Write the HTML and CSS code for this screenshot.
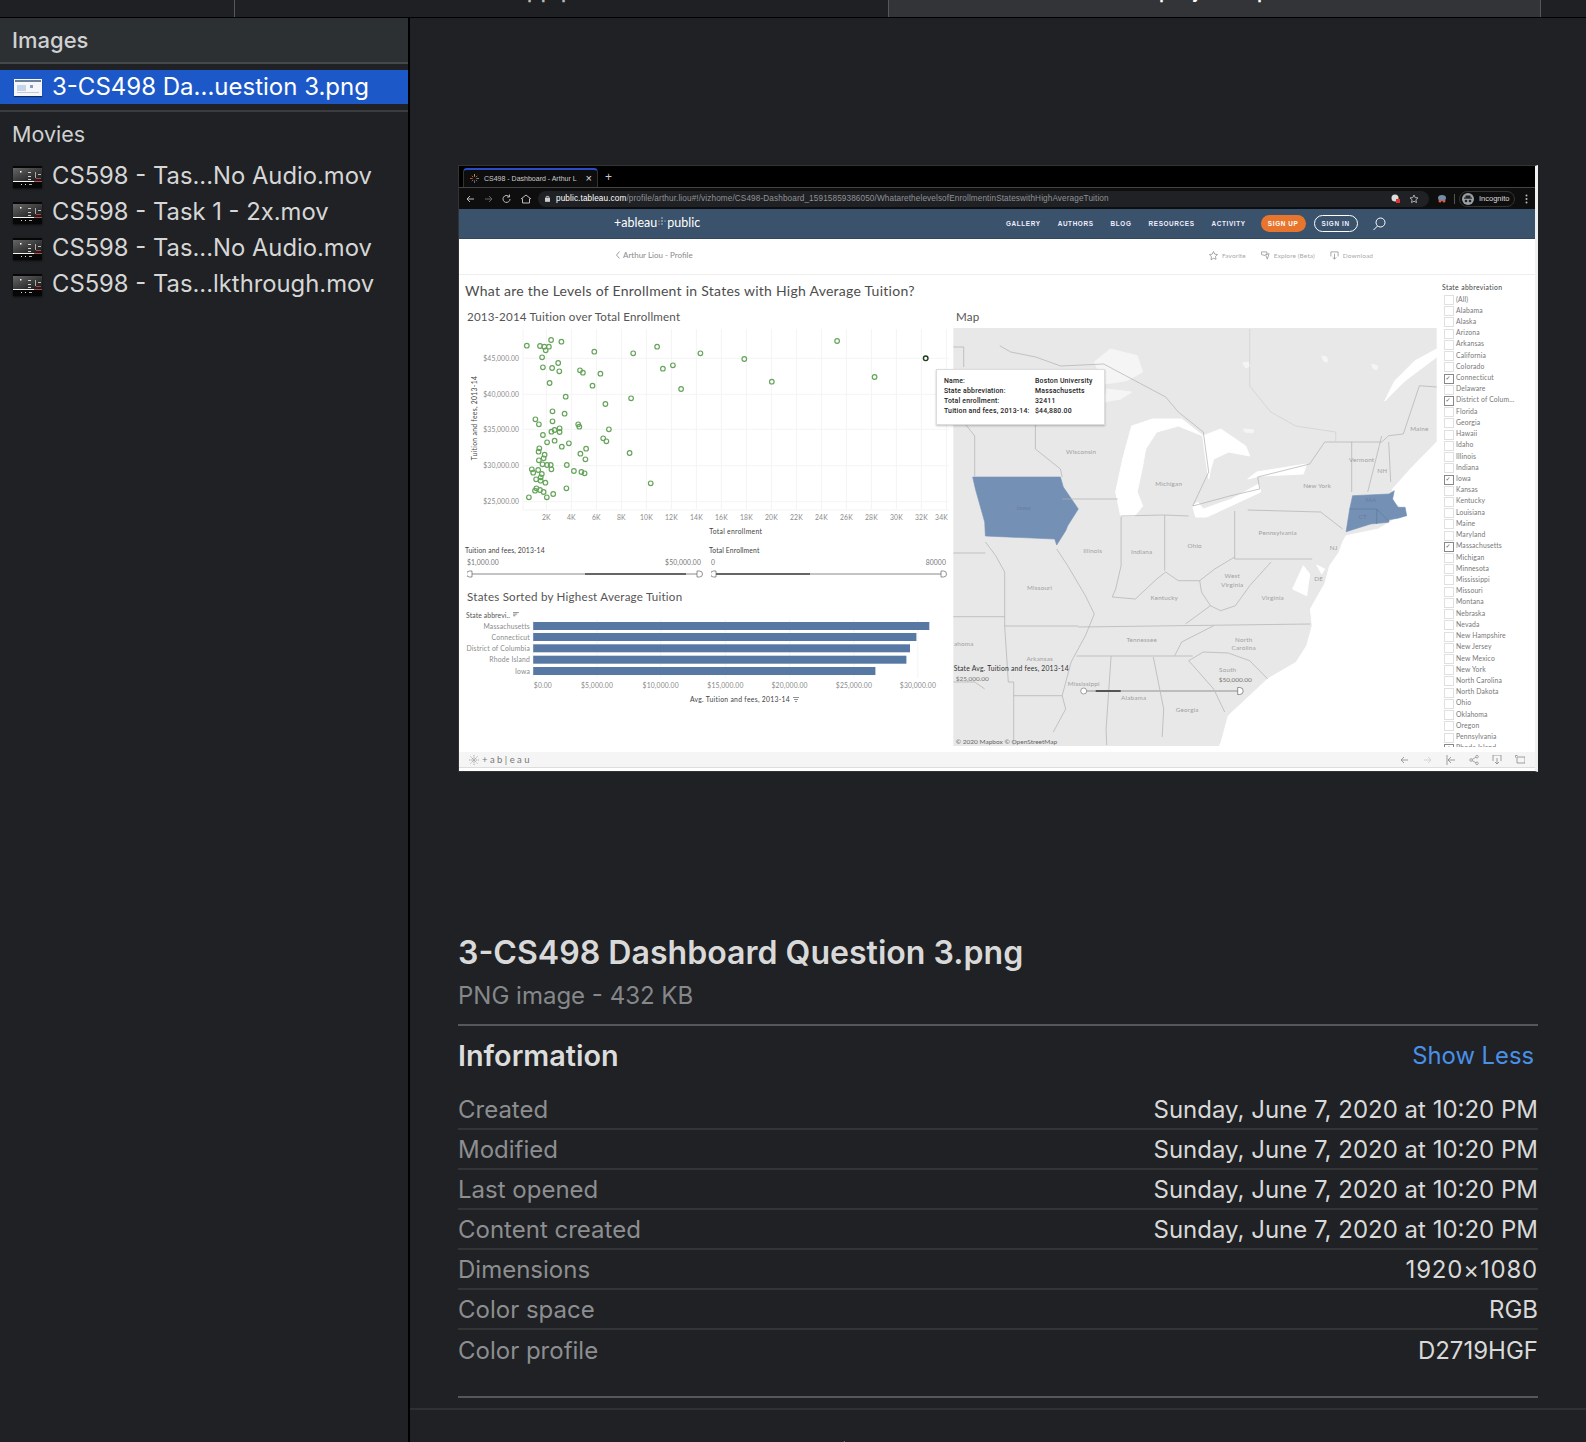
FILE: index.html
```html
<!DOCTYPE html>
<html lang="en">
<head>
<meta charset="utf-8">
<title>Quick Look</title>
<link rel="stylesheet" href="styles.css">
</head>
<body>
<div class="tabs">
  <div class="tab tab-a"></div>
  <div class="tab tab-b"><span class="tab-title">pp.pdf</span></div>
  <div class="tab tab-c"><span class="tab-title">project.zip</span></div>
  <div class="tab tab-d"></div>
</div>
<div class="main">
  <aside class="side">
    <div class="side-head">Images</div>
    <div class="side-sel">
      <svg class="thumb-img" viewBox="0 0 28 17"><rect width="28" height="17" fill="#f4f6fa"/><rect x="1" y="1" width="26" height="2" fill="#6d7f95"/><rect x="3" y="6" width="9" height="6" fill="#c5d3e8"/><rect x="16" y="6" width="3" height="3" fill="#7f9ccc"/><rect x="3" y="13" width="22" height="1" fill="#c4c8d0"/></svg>
      <span>3-CS498 Da...uestion 3.png</span>
    </div>
    <div class="side-rule"></div>
    <div class="side-label">Movies</div>
    <div class="movie"><svg class="thumb-mov" viewBox="0 0 29 22"><use href="#mov"/></svg><span>CS598 - Tas...No Audio.mov</span></div>
    <div class="movie"><svg class="thumb-mov" viewBox="0 0 29 22"><use href="#mov"/></svg><span>CS598 - Task 1 - 2x.mov</span></div>
    <div class="movie"><svg class="thumb-mov" viewBox="0 0 29 22"><use href="#mov"/></svg><span>CS598 - Tas...No Audio.mov</span></div>
    <div class="movie"><svg class="thumb-mov" viewBox="0 0 29 22"><use href="#mov"/></svg><span>CS598 - Tas...lkthrough.mov</span></div>
    <svg class="defs" width="0" height="0"><defs>
      <linearGradient id="movg" x1="0" y1="0" x2="1" y2="1"><stop offset="0" stop-color="#666"/><stop offset="1" stop-color="#161616"/></linearGradient>
      <g id="mov">
      <rect width="29" height="22" fill="#070707"/>
      <rect y="2" width="29" height="13" fill="url(#movg)"/>
      <rect y="15" width="21" height="1" fill="#f4f4f4"/><rect x="21" y="15" width="8" height="1" fill="#a55"/>
      <rect x="7" y="5" width="1.500" height="1.500" fill="#fff"/><rect x="15" y="6" width="3" height="1" fill="#ccc"/><rect x="15" y="10" width="3" height="1" fill="#ccc"/><rect x="15" y="13" width="3" height="1" fill="#ccc"/>
      <rect x="22" y="6" width="1" height="6" fill="#aaa"/><rect x="25" y="8" width="3" height="1" fill="#bbb"/><rect x="23" y="12" width="5" height="1" fill="#a44"/>
      <rect x="8" y="18" width="1" height="1" fill="#ddd"/><rect x="12" y="18" width="1" height="1" fill="#ddd"/><rect x="16" y="18" width="3" height="1" fill="#aaa"/>
    </g></defs></svg>
  </aside>
  <main class="detail">
    <div class="shot">
      <div class="c-tabs">
        <div class="c-tab"><svg class="fav" viewBox="0 0 10 10"><path d="M5 0v3" stroke="#e8a23c"/><path d="M5 7v3" stroke="#4a7fc4"/><path d="M0 5h3" stroke="#d8552c"/><path d="M7 5h3" stroke="#6a8fa8"/><path d="M2 2l1.500 1.500M8 2L6.500 3.500M2 8l1.500-1.500M8 8L6.500 6.500" stroke="#c96a3c"/></svg><span class="c-tab-t">CS498 - Dashboard - Arthur L</span><span class="c-x">×</span></div>
        <span class="c-plus">+</span>
      </div>
      <div class="c-bar">
        <svg class="nav-ico" viewBox="0 0 68 12"><path d="M8 6H1M4 3L1 6l3 3" stroke="#bbb" fill="none"/><path d="M19 6h7M23 3l3 3-3 3" stroke="#666" fill="none"/><path d="M43 3.500a3.500 3.500 0 1 0 1 2.500M43.500 1.500v2.500h-2.500" stroke="#bbb" fill="none"/><path d="M55 6l5-4 5 4M56.500 5.500V10h7V5.500" stroke="#bbb" fill="none"/></svg>
        <div class="c-url">
          <svg class="lock" viewBox="0 0 6 8"><rect y="3" width="6" height="5" fill="#ccc"/><path d="M1.500 3V1.500h3V3" stroke="#ccc" fill="none"/></svg>
          <span class="u-w">public.tableau.com</span><span class="u-g">/profile/arthur.liou#!/vizhome/CS498-Dashboard_15915859386050/WhatarethelevelsofEnrollmentinStateswithHighAverageTuition</span>
          <svg class="c-ext" viewBox="0 0 28 10"><circle cx="4" cy="4" r="3.500" fill="#ddd"/><rect x="5" y="5" width="4" height="4" fill="#d33"/><path d="M23 1l1.200 2.600 2.800.3-2.100 1.900.6 2.800L23 7.200 20.500 8.600l.6-2.800L19 3.900l2.800-.3z" fill="none" stroke="#ccc" stroke-width=".8"/></svg>
        </div>
        <svg class="c-spy" viewBox="0 0 10 8"><ellipse cx="5" cy="3" rx="4" ry="3" fill="#6f8da6"/><circle cx="3" cy="6" r="1.500" fill="#e05a4a"/><circle cx="7" cy="6" r="1.500" fill="#e05a4a"/></svg>
        <i class="c-sep"></i>
        <div class="c-inc"><svg class="inc-ico" viewBox="0 0 12 12"><circle cx="6" cy="6" r="6" fill="#9aa0a6"/><rect x="2" y="4.500" width="8" height="1.200" fill="#222"/><rect x="3.500" y="2.500" width="5" height="2.500" fill="#222"/><circle cx="4" cy="8" r="1.300" fill="#222"/><circle cx="8" cy="8" r="1.300" fill="#222"/></svg><span>Incognito</span></div>
        <svg class="c-dots" viewBox="0 0 3 10"><circle cx="1.500" cy="1.500" r="1" fill="#bbb"/><circle cx="1.500" cy="5" r="1" fill="#bbb"/><circle cx="1.500" cy="8.500" r="1" fill="#bbb"/></svg>
      </div>
      <div class="site-nav">
        <div class="site-logo">+ableau<svg class="logo-dots" viewBox="0 0 8 10"><circle cx="4" cy="1" r=".7"/><circle cx="1" cy="4" r=".6"/><circle cx="4" cy="4" r=".8"/><circle cx="7" cy="4" r=".6"/><circle cx="1" cy="7" r=".6"/><circle cx="4" cy="7" r=".7"/></svg>public</div>
        <div class="site-links">
          <span class="link-gal">GALLERY</span><span>AUTHORS</span><span>BLOG</span><span>RESOURCES</span><span>ACTIVITY</span>
          <span class="pill-up">SIGN UP</span><span class="pill-in">SIGN IN</span>
          <svg class="site-search" viewBox="0 0 14 14"><circle cx="8.500" cy="5.500" r="4.500" fill="none" stroke="#fff"/><path d="M5.500 9L1.500 13" stroke="#fff"/></svg>
        </div>
      </div>
      <div class="subbar">
        <span class="back"><svg class="chev" viewBox="0 0 4 8"><path d="M3.500 .5L.5 4l3 3.500" fill="none" stroke="#888" stroke-width=".8"/></svg>Arthur Liou - Profile</span>
        <div class="sub-actions">
          <span class="act act-fav"><svg viewBox="0 0 10 10"><path d="M5 .5l1.400 3 3.100.4-2.300 2.100.6 3.200L5 8.100 2.200 9.700l.6-3.200L.5 3.900l3.100-.4z" fill="none" stroke="#888" stroke-width=".8"/></svg>Favorite</span>
          <span class="act act-exp"><svg viewBox="0 0 10 10"><path d="M.5 1h6v3M.5 1v3l4 1M5 4l2 5 2-6z" fill="none" stroke="#888" stroke-width=".8"/></svg>Explore (Beta)</span>
          <span class="act"><svg viewBox="0 0 10 10"><path d="M1 6V1h8v5M5 3v6M3 7l2 2 2-2" fill="none" stroke="#888" stroke-width=".8"/></svg>Download</span>
        </div>
      </div>
      <div class="dash">
        <div class="dash-left">
          <div class="dash-title">What are the Levels of Enrollment in States with High Average Tuition?</div>
          <div class="sec-title sec-1">2013-2014 Tuition over Total Enrollment</div>
          <svg class="scatter" viewBox="458 326 491 214">
            <g class="grid">
              <path d="M523 329V510M546.400 329V510M571.400 329V510M596.400 329V510M621.400 329V510M646.400 329V510M671.400 329V510M696.400 329V510M721.400 329V510M746.400 329V510M771.400 329V510M796.400 329V510M821.400 329V510M846.400 329V510M871.400 329V510M896.400 329V510M921.400 329V510M946.400 329V510"/>
              <path d="M523 358.300H949M523 394.300H949M523 429.300H949M523 465.700H949M523 501.700H949M523 510H949"/>
            </g>
            <g class="ax-l">
              <text x="519" y="360.500">$45,000.00</text><text x="519" y="396.500">$40,000.00</text><text x="519" y="431.500">$35,000.00</text><text x="519" y="468">$30,000.00</text><text x="519" y="504">$25,000.00</text>
            </g>
            <text class="ax-t" transform="translate(477 418) rotate(-90)">Tuition and fees, 2013-14</text>
            <g class="ax-x">
              <text x="546.400" y="519.500">2K</text><text x="571.400" y="519.500">4K</text><text x="596.400" y="519.500">6K</text><text x="621.400" y="519.500">8K</text><text x="646.400" y="519.500">10K</text><text x="671.400" y="519.500">12K</text><text x="696.400" y="519.500">14K</text><text x="721.400" y="519.500">16K</text><text x="746.400" y="519.500">18K</text><text x="771.400" y="519.500">20K</text><text x="796.400" y="519.500">22K</text><text x="821.400" y="519.500">24K</text><text x="846.400" y="519.500">26K</text><text x="871.400" y="519.500">28K</text><text x="896.400" y="519.500">30K</text><text x="921.400" y="519.500">32K</text><text x="941.500" y="519.500">34K</text>
            </g>
            <text class="ax-t" x="735.700" y="534">Total enrollment</text>
            <g class="pts">
              <circle cx="526.8" cy="345.7" r="2.3"/><circle cx="540" cy="346" r="2.3"/><circle cx="544.3" cy="346.7" r="2.3"/><circle cx="548.9" cy="346.7" r="2.3"/><circle cx="545.7" cy="350.3" r="2.3"/><circle cx="551.1" cy="340" r="2.3"/><circle cx="561.4" cy="341.7" r="2.3"/><circle cx="542.1" cy="357.3" r="2.3"/><circle cx="558.2" cy="363" r="2.3"/><circle cx="542.9" cy="367.3" r="2.3"/><circle cx="552.1" cy="368" r="2.3"/><circle cx="559.3" cy="371.3" r="2.3"/><circle cx="549.6" cy="383" r="2.3"/><circle cx="594.3" cy="351.7" r="2.3"/><circle cx="633.2" cy="353.3" r="2.3"/><circle cx="657.1" cy="346.7" r="2.3"/><circle cx="700.4" cy="353.3" r="2.3"/><circle cx="837.1" cy="341" r="2.3"/><circle cx="744.3" cy="359" r="2.3"/><circle cx="874.6" cy="377" r="2.3"/><circle cx="771.8" cy="381.7" r="2.3"/><circle cx="672.9" cy="365.3" r="2.3"/><circle cx="662.9" cy="368.7" r="2.3"/><circle cx="681.1" cy="389" r="2.3"/><circle cx="580" cy="370.3" r="2.3"/><circle cx="582.9" cy="372.7" r="2.3"/><circle cx="600.4" cy="373.7" r="2.3"/><circle cx="592.5" cy="385.7" r="2.3"/><circle cx="565.7" cy="396.7" r="2.3"/><circle cx="631.1" cy="398.3" r="2.3"/><circle cx="605.4" cy="404" r="2.3"/><circle cx="552.5" cy="411.3" r="2.3"/><circle cx="564.6" cy="413.7" r="2.3"/><circle cx="535.4" cy="419.3" r="2.3"/><circle cx="552.5" cy="421.3" r="2.3"/><circle cx="538.9" cy="424.3" r="2.3"/><circle cx="578.2" cy="424.3" r="2.3"/><circle cx="579.3" cy="426.7" r="2.3"/><circle cx="608.9" cy="429.3" r="2.3"/><circle cx="559.6" cy="428.3" r="2.3"/><circle cx="559.6" cy="432" r="2.3"/><circle cx="551.4" cy="431.7" r="2.3"/><circle cx="554.6" cy="430" r="2.3"/><circle cx="542.9" cy="435" r="2.3"/><circle cx="547.1" cy="442.3" r="2.3"/><circle cx="554.6" cy="440.7" r="2.3"/><circle cx="568.9" cy="443.3" r="2.3"/><circle cx="561.8" cy="446.7" r="2.3"/><circle cx="603.2" cy="438.3" r="2.3"/><circle cx="606.4" cy="441.3" r="2.3"/><circle cx="539.3" cy="448.3" r="2.3"/><circle cx="538.6" cy="451.7" r="2.3"/><circle cx="544.6" cy="454.7" r="2.3"/><circle cx="543.6" cy="458.3" r="2.3"/><circle cx="586.1" cy="448.7" r="2.3"/><circle cx="580.4" cy="453.7" r="2.3"/><circle cx="585.4" cy="459.3" r="2.3"/><circle cx="629.6" cy="453" r="2.3"/><circle cx="538.9" cy="460.3" r="2.3"/><circle cx="542.5" cy="464.3" r="2.3"/><circle cx="547.1" cy="465" r="2.3"/><circle cx="550.7" cy="465" r="2.3"/><circle cx="551.4" cy="469.3" r="2.3"/><circle cx="566.8" cy="465" r="2.3"/><circle cx="573.9" cy="471" r="2.3"/><circle cx="531.8" cy="469.3" r="2.3"/><circle cx="533.2" cy="472.7" r="2.3"/><circle cx="538.2" cy="470" r="2.3"/><circle cx="541.8" cy="474" r="2.3"/><circle cx="581.4" cy="472" r="2.3"/><circle cx="584.6" cy="473.3" r="2.3"/><circle cx="540.7" cy="477.3" r="2.3"/><circle cx="536.1" cy="479.3" r="2.3"/><circle cx="540.7" cy="480.7" r="2.3"/><circle cx="545.4" cy="482.7" r="2.3"/><circle cx="650.7" cy="483.3" r="2.3"/><circle cx="566.4" cy="488.3" r="2.3"/><circle cx="536.4" cy="488.3" r="2.3"/><circle cx="535" cy="490.7" r="2.3"/><circle cx="540" cy="490" r="2.3"/><circle cx="543.6" cy="492" r="2.3"/><circle cx="553.2" cy="494" r="2.3"/><circle cx="528.9" cy="497.3" r="2.3"/><circle cx="546.8" cy="497.3" r="2.3"/>
            </g>
            <circle class="pt-on" cx="925.7" cy="358.3" r="2.3"/>
          </svg>
          <div class="sliders">
            <div class="slider">
              <div class="sl-name">Tuition and fees, 2013-14</div>
              <div class="sl-vals"><span>$1,000.00</span><span>$50,000.00</span></div>
              <svg class="sl-track" viewBox="0 0 236 8"><path d="M5 4h226" stroke="#c4c4c4" stroke-width="2"/><path d="M118 4h101" stroke="#666" stroke-width="2"/><path d="M5 1H2.500a3 3 0 0 0 0 6H5zM230 1h2.500a3 3 0 0 1 0 6H230z" fill="#fff" stroke="#666" stroke-width=".7"/></svg>
            </div>
            <div class="slider">
              <div class="sl-name">Total Enrollment</div>
              <div class="sl-vals sl-v2"><span>0</span><span>80000</span></div>
              <svg class="sl-track" viewBox="0 0 236 8"><path d="M5 4h226" stroke="#c4c4c4" stroke-width="2"/><path d="M5 4h94" stroke="#666" stroke-width="2"/><path d="M5 1H2.500a3 3 0 0 0 0 6H5zM230 1h2.500a3 3 0 0 1 0 6H230z" fill="#fff" stroke="#666" stroke-width=".7"/></svg>
            </div>
          </div>
          <div class="sec-title sec-3">States Sorted by Highest Average Tuition</div>
          <div class="bars-head">State abbrevi.. <svg class="sort" viewBox="0 0 7 6"><path d="M0 .5h7M0 2.500h5M0 4.500h3" stroke="#777"/></svg></div>
          <svg class="bars" viewBox="458 620 491 90">
            <path class="grid" d="M533.200 620V678M597 620V678M660.700 620V678M725.400 620V678M789.600 620V678M853.900 620V678M917.900 620V678"/>
            <g class="bar-l"><text x="530" y="628.500">Massachusetts</text><text x="530" y="639.500">Connecticut</text><text x="530" y="651">District of Columbia</text><text x="530" y="662">Rhode Island</text><text x="530" y="673.500">Iowa</text></g>
            <g class="bar-r"><rect x="533.200" y="622" width="396.100" height="8"/><rect x="533.200" y="633" width="383.200" height="8"/><rect x="533.200" y="644.300" width="376.800" height="8"/><rect x="533.200" y="655.700" width="373.200" height="8"/><rect x="533.200" y="667" width="342.200" height="8"/></g>
            <g class="ax-x"><text x="542.900" y="688">$0.00</text><text x="597" y="688">$5,000.00</text><text x="660.700" y="688">$10,000.00</text><text x="725.400" y="688">$15,000.00</text><text x="789.600" y="688">$20,000.00</text><text x="853.900" y="688">$25,000.00</text><text x="917.900" y="688">$30,000.00</text></g>
            <text class="ax-t" x="740" y="702">Avg. Tuition and fees, 2013-14</text>
            <path d="M793 697.500h6M794 699.500h4M795 701.500h2" stroke="#777" stroke-width=".8"/>
          </svg>
        </div>
        <div class="dash-map">
          <div class="sec-title sec-map">Map</div>
          <svg class="map" viewBox="953.600 329 483.400 418">
            <rect x="953.600" y="329" width="483.400" height="418" fill="#e8e8e8"/>
            <g class="water">
              <path d="M1437 443L1410.700 470L1392.900 490L1391 500L1407 513L1378.600 530L1346.400 536.700L1342.900 543.300L1339.300 553.300L1330 566.700L1325 585L1322 590L1310.700 610L1312.500 626.700L1307 646.700L1296.400 663.300L1267.900 680L1250 696.700L1228.600 716.700L1221.400 743.300L1219.600 747H1437Z"/>
              <path d="M1303.600 566.700L1292.900 590L1307 596.700L1310 575Z"/>
              <path d="M1317 566L1325 570L1322 575Z"/>
              <path d="M1437 350V358L1405 382L1385 402L1395 382L1415 362Z"/>
              <path class="pale" d="M1094.600 363L1110.700 350L1137.500 356.700L1143 373L1126.800 381.700L1105 385Z"/>
              <path class="pale" d="M1107 390L1132 393L1121 400L1105 403Z"/>
              <path d="M1121 517L1116 493L1123 460L1132 427L1153 420L1182 420L1203.600 437L1178.600 427L1157 433L1146 450L1143 467L1137.500 493L1143 507L1135 517Z"/>
              <path d="M1203 437L1221 430L1246 447L1250 457L1229 453L1214 460L1211 470L1209 480L1206 460Z"/>
              <path d="M1193 507L1196 518L1207 518L1261 493L1259 485L1232 500L1203.600 510L1198 503Z"/>
              <path d="M1248 480L1257 473L1307 465L1303.600 475L1261 477Z"/>
              <path class="pale" d="M1243 364l6-1 2 4-5 2zM1322 357l5 1 1 5-4-1zM1372 365l6 2-1 4-4-2zM1244 430l10 1-1 3-8-1z"/>
            </g>
            <g class="fill-st">
              <path d="M973 478H1060.700L1063.600 488L1078.600 510L1068 526.700L1066 531.700L1057 546L1055 540L985.700 537L985 523L975.700 490Z"/>
              <path d="M1352.900 496.700L1389.300 495L1394.600 491.700L1392.900 500L1398.200 508.300L1405.400 508.300L1407 516.700L1398.200 519.300L1389.300 520.700L1389 523.300L1371 525L1346.400 532.700L1350 510Z"/>
            </g>
            <path class="st-in" d="M1350 510H1377L1389 522M1377 510V525"/>
            <g class="lines">
              <path d="M953.600 348H964V368M964 423L975 437V477"/>
              <path d="M1000 346.700L1011 353L1036 358L1061 367L1104 365L1166 398L1178.600 413L1203.600 433L1209 473L1193 507L1230 497L1260 490L1258 478L1310 465L1325 443H1382L1389 436.700L1403.600 435L1419.700 386.700L1437 388"/>
              <path class="thin" d="M1250 330V387L1271 413L1296 427L1336 433V443"/>
              <path d="M1035.700 423V450L1060.700 470L1062.500 478M1062.500 500H1118M1121.400 518V566.700L1116 590L1112.500 598M1121 517L1164 516L1189 517M1165 516V571.700M1235 512V560M1235 560H1312.500M1248 511L1321 513L1343 530M1352 443V493M1389 443L1391 483M1382 437L1368 493"/>
              <path d="M1112.500 598L1135.700 600L1157 580L1166 573L1178.600 581.700L1200 581.700L1201.800 593L1210.700 606.700L1221 611.700L1235.700 606.700L1250 586.700L1271.400 563M1200 581.700L1215 570L1235 558M1078.600 628L1310.700 625M1185.700 625L1210.700 606.700M1076.800 657H1192.900M1175 656.700L1182 643L1214 626.700M1189 661.700L1203.600 653L1228.600 654L1250 661.700L1268 680M1189 661.700L1214 690L1225 713M1153.600 658L1164 710L1162.500 738M1111.400 657L1106.400 730L1107 746M1094.600 615L1085.700 636.700L1071.400 663L1062.500 696.700L1066 710L1053.600 733M1057 550L1068 566.700L1085.700 596.700L1094.600 615"/>
              <path d="M985.700 543L996 556.700L1005 573V627H1078.600M1014 696.700H1062.500M1014 683V746M1005 627L1008.600 683H1014M953.600 617.700H1005M953.600 554H985.700M953.600 683L975 683L985 690"/>
            </g>
            <g class="m-lab">
              <text x="1081.400" y="455">Wisconsin</text><text x="1169" y="487">Michigan</text><text x="1317.500" y="489">New York</text><text x="1419.600" y="432">Maine</text><text x="1362" y="463">Vermont</text><text x="1382.600" y="474">NH</text><text class="on-st" x="1371.400" y="503">MA</text><text class="on-st" x="1363" y="520">CT</text><text class="on-st" x="1023.900" y="511">Iowa</text><text x="1093" y="554.300">Illinois</text><text x="1142" y="554.500">Indiana</text><text x="1195" y="549">Ohio</text><text x="1278" y="536">Pennsylvania</text><text x="1040" y="591">Missouri</text><text x="1164.600" y="600.700">Kentucky</text><text x="1232.500" y="579.300">West</text><text x="1232.500" y="587.500">Virginia</text><text x="1273" y="601">Virginia</text><text x="1319" y="582">DE</text><text x="1334" y="551">NJ</text><text x="1142" y="642.700">Tennessee</text><text x="1244" y="643">North</text><text x="1244" y="651">Carolina</text><text x="1040" y="662.300">Arkansas</text><text x="1228" y="673">South</text><text x="1084" y="686.700">Mississippi</text><text x="1134" y="701.300">Alabama</text><text x="1187.500" y="712.700">Georgia</text><text x="964" y="647">ahoma</text>
            </g>
            <text class="m-dark" x="954" y="671.500">State Avg. Tuition and fees, 2013-14</text>
            <text class="m-val" x="956" y="682">$25,000.00</text>
            <text class="m-val" x="1219" y="683">$50,000.00</text>
            <path d="M1086 692H1241" stroke="#bdbdbd" stroke-width="2"/><path d="M1096 692H1121" stroke="#555" stroke-width="2"/>
            <circle cx="1084" cy="692" r="3" fill="#fff" stroke="#666" stroke-width=".6"/>
            <path d="M1238 688.500h2a3.500 3.500 0 0 1 0 7h-2z" fill="#fff" stroke="#666" stroke-width=".7"/>
            <text class="m-copy" x="956" y="745">© 2020 Mapbox  © OpenStreetMap</text>
          </svg>
        </div>
        <div class="filter">
          <div class="f-title">State abbreviation</div>
          <ul class="f-list">
            <li>(All)</li><li>Alabama</li><li>Alaska</li><li>Arizona</li><li>Arkansas</li><li>California</li><li>Colorado</li><li class="on">Connecticut</li><li>Delaware</li><li class="on">District of Colum...</li><li>Florida</li><li>Georgia</li><li>Hawaii</li><li>Idaho</li><li>Illinois</li><li>Indiana</li><li class="on">Iowa</li><li>Kansas</li><li>Kentucky</li><li>Louisiana</li><li>Maine</li><li>Maryland</li><li class="on">Massachusetts</li><li>Michigan</li><li>Minnesota</li><li>Mississippi</li><li>Missouri</li><li>Montana</li><li>Nebraska</li><li>Nevada</li><li>New Hampshire</li><li>New Jersey</li><li>New Mexico</li><li>New York</li><li>North Carolina</li><li>North Dakota</li><li>Ohio</li><li>Oklahoma</li><li>Oregon</li><li>Pennsylvania</li><li class="on">Rhode Island</li>
          </ul>
        </div>
        <div class="tip">
          <div class="tip-row"><span>Name:</span><span>Boston University</span></div>
          <div class="tip-row"><span>State abbreviation:</span><span>Massachusetts</span></div>
          <div class="tip-row"><span>Total enrollment:</span><span>32411</span></div>
          <div class="tip-row"><span>Tuition and fees, 2013-14:</span><span>$44,880.00</span></div>
        </div>
      </div>
      <div class="foot">
        <div class="foot-logo"><svg class="foot-mark" viewBox="0 0 10 10"><path d="M5 0v10M0 5h10M1.500 1.500l7 7M8.500 1.500l-7 7" stroke="#999" stroke-width=".8" stroke-dasharray="1.500 .7"/></svg><span>+ a b | e a u</span></div>
        <svg class="foot-ico" viewBox="0 0 124 10"><path d="M7 5H0M3 2L0 5l3 3" stroke="#888" fill="none" stroke-width=".8"/><path d="M23 5h7M27 2l3 3-3 3" stroke="#ccc" fill="none" stroke-width=".8"/><path d="M46 0v10M54 5h-7M50 2l-3 3 3 3" stroke="#888" fill="none" stroke-width=".8"/><circle cx="70" cy="5" r="1.300" fill="none" stroke="#888" stroke-width=".7"/><circle cx="76" cy="1.700" r="1.300" fill="none" stroke="#888" stroke-width=".7"/><circle cx="76" cy="8.300" r="1.300" fill="none" stroke="#888" stroke-width=".7"/><path d="M71 4.500l4-2.300M71 5.500l4 2.300" stroke="#888" stroke-width=".7"/><path d="M92 6V0h8v6M96 3v6M94 7l2 2 2-2" stroke="#888" fill="none" stroke-width=".8"/><path d="M116 2h8v6h-8zM114.500 .5h2M114.500 .5v2M124 9.500h1.500M125.500 9.500v-2" stroke="#888" fill="none" stroke-width=".8"/></svg>
      </div>
    </div>
    <section class="info">
      <h1 class="file-name">3-CS498 Dashboard Question 3.png</h1>
      <div class="file-kind">PNG image - 432 KB</div>
      <div class="info-head"><h2>Information</h2><a class="show-less">Show Less</a></div>
      <dl class="rows">
        <div class="row"><dt>Created</dt><dd>Sunday, June 7, 2020 at 10:20 PM</dd></div>
        <div class="row"><dt>Modified</dt><dd>Sunday, June 7, 2020 at 10:20 PM</dd></div>
        <div class="row"><dt>Last opened</dt><dd>Sunday, June 7, 2020 at 10:20 PM</dd></div>
        <div class="row"><dt>Content created</dt><dd>Sunday, June 7, 2020 at 10:20 PM</dd></div>
        <div class="row"><dt>Dimensions</dt><dd class="dim">1920×1080</dd></div>
        <div class="row"><dt>Color space</dt><dd>RGB</dd></div>
        <div class="row"><dt>Color profile</dt><dd>D2719HGF</dd></div>
      </dl>
    </section>
    <div class="strip">
      <svg class="strip-ico" viewBox="0 0 340 10"><path d="M7 3l-7 7" stroke="#bbb" stroke-width="2" fill="none"/><circle cx="160" cy="17" r="14" fill="#bbb"/><circle cx="312" cy="17" r="14" fill="#bbb"/></svg>
    </div>
  </main>
</div>
</body>
</html>
```
FILE: styles.css
```css
* { box-sizing: border-box; }
html, body { margin: 0; padding: 0; }
body { width: 1586px; height: 1442px; overflow: hidden; background: #1f2124; font-family: Inter, "Noto Sans", sans-serif; color: #d9d9d9; }

.tabs { display: flex; height: 18px; background: #1e2023; border-bottom: 1px solid #000; }
.tab { height: 17px; overflow: hidden; display: flex; justify-content: center; }
.tab-a { width: 235px; border-right: 1px solid #55585b; }
.tab-b { width: 654px; border-right: 1px solid #55585b; }
.tab-c { width: 652px; background: #323437; border-right: 1px solid #55585b; }
.tab-d { flex: 1; }
.tab-title { font-size: 22px; line-height: 22px; margin-top: -21px; color: #bbb; font-weight: 500; }
.tab-c .tab-title { color: #fff; }

.main { display: flex; height: 1424px; }
.side { width: 410px; flex: none; border-right: 2px solid #000; background: #1f2124; }
.side-head { height: 46px; background: #2c3033; border-bottom: 2px solid #45484a; font-size: 22px; font-weight: 500; color: #cfd1d2; padding: 9px 12px 0; line-height: 26px; }
.side-sel { height: 34px; margin-top: 6px; background: #1d58c9; display: flex; align-items: center; color: #fff; font-size: 24px; padding: 0 0 2px 14px; gap: 10px; }
.thumb-img { width: 28px; height: 17px; box-shadow: 0 1px 1px rgba(0,0,0,.5); margin-top: 2px; }
.side-rule { height: 2px; background: #3a3c3f; margin-top: 6px; }
.side-label { font-size: 21.500px; color: #cfd1d2; padding: 9px 12px 0; line-height: 26px; height: 47px; }
.movie { height: 36px; display: flex; align-items: center; gap: 10px; padding: 0 0 3px 13px; font-size: 23.800px; color: #d6d6d6; }
.thumb-mov { width: 29px; height: 22px; flex: none; margin-top: 3px; box-shadow: 0 1px 2px rgba(0,0,0,.6); }
.defs { position: absolute; }

.detail { flex: 1; padding: 0 0 0 48px; position: relative; }
.shot { width: 1080px; height: 607px; margin-top: 147px; background: #fff; border: 1px solid #333; border-right: 3px solid #f0f0f0; display: flex; flex-direction: column; overflow: hidden; color: #333; font-family: Lato, "Open Sans", sans-serif; position: relative; }

.c-tabs { height: 22px; background: #000; display: flex; align-items: flex-end; padding-left: 4px; flex: none; border-bottom: 1px solid #444; }
.c-tab { width: 135px; height: 19px; background: #0d0d0e; border-top: 2px solid #2a4bc7; border-radius: 4px 4px 0 0; border-left: 1px solid #333; border-right: 1px solid #333; display: flex; align-items: center; padding-left: 6px; color: #ccc; font-size: 7px; font-family: "Liberation Sans", sans-serif; }
.fav { width: 9px; height: 9px; margin-right: 5px; flex: none; }
.c-tab-t { flex: 1; white-space: nowrap; overflow: hidden; }
.c-x { font-size: 11px; margin-right: 5px; color: #ddd; line-height: 1; }
.c-plus { color: #ccc; font: 12px "Liberation Sans", sans-serif; margin: 0 0 3px 7px; }
.c-bar { height: 21px; background: #0e0e0f; display: flex; align-items: center; padding-left: 7px; flex: none; }
.nav-ico { width: 68px; height: 12px; flex: none; }
.c-url { width: 891px; height: 16px; border-radius: 8px; background: #202124; font: 8.200px "Liberation Sans", sans-serif; letter-spacing: .12px; display: flex; align-items: center; padding-left: 7px; white-space: nowrap; flex: none; overflow: hidden; margin-left: 4px; }
.lock { width: 5px; height: 7px; margin-right: 6px; flex: none; }
.u-w { color: #fff; }
.u-g { color: #8f9296; }
.c-ext { width: 28px; height: 10px; margin-left: auto; margin-right: 10px; flex: none; }
.c-spy { width: 10px; height: 8px; margin-left: 8px; flex: none; }
.c-sep { width: 1px; height: 10px; background: #555; margin-left: 7px; }
.c-inc { display: flex; align-items: center; margin-left: 4px; height: 16px; width: 56px; border: 1px solid #333; border-radius: 8px; color: #ddd; font: 7.500px "Liberation Sans", sans-serif; padding-left: 2px; gap: 5px; flex: none; }
.inc-ico { width: 12px; height: 12px; }
.c-dots { width: 3px; height: 10px; margin-left: 10px; flex: none; }

.site-nav { height: 30px; background: #3a526b; display: flex; align-items: center; flex: none; padding-right: 3px; border-bottom: 1px solid #33475c; }
.site-logo { margin-left: 155px; width: 392px; font-size: 12.500px; color: #fff; line-height: 1; display: flex; align-items: center; }
.logo-dots { width: 8px; height: 10px; margin: -4px 1px 0; fill: #e4e8ee; }
.site-links { display: flex; align-items: center; font: 700 6.400px "Liberation Sans", sans-serif; letter-spacing: .62px; color: #eef; gap: 17px; white-space: nowrap; }
.pill-up { background: #e8752d; border-radius: 9px; height: 17px; line-height: 17px; width: 45px; text-align: center; color: #fff; margin-left: -2px; }
.pill-in { border: 1px solid #fff; border-radius: 9px; height: 17px; line-height: 15px; width: 44px; text-align: center; margin-left: -9px; }
.site-search { width: 14px; height: 14px; margin-left: -3px; }

.subbar { height: 36px; background: #fff; border-bottom: 1px solid #eee; display: flex; align-items: center; flex: none; padding-bottom: 3px; font: 7px Lato, sans-serif; color: #999; }
.back { margin-left: 157px; font-size: 8px; color: #8a8a8a; width: 593px; display: flex; align-items: center; gap: 3px; }
.chev { width: 4px; height: 8px; }
.sub-actions { display: flex; gap: 15px; }
.act { display: flex; align-items: center; gap: 4px; font-size: 6.500px; letter-spacing: .1px; color: #aaa; }
.act svg { width: 9px; height: 9px; }

.dash { flex: 1; display: flex; background: #fff; position: relative; min-height: 0; margin-left: -1px; }
.dash-left { width: 495px; flex: none; padding: 0; }
.dash-title { font-size: 14px; letter-spacing: .26px; color: #4d4d4d; margin: 9px 0 0 7px; line-height: 14px; white-space: nowrap; }
.sec-title { font-size: 11.600px; letter-spacing: .18px; color: #555; white-space: nowrap; line-height: 14px; }
.sec-1 { margin: 12px 0 2px 9px; }
.scatter { display: block; width: 491px; height: 214px; }
.grid { fill: none; stroke: #f4f4f4; stroke-width: 1; }
.ax-l text { font: 6.800px Lato, sans-serif; letter-spacing: .1px; fill: #8a8a8a; text-anchor: end; }
.ax-x text { font: 6.800px Lato, sans-serif; letter-spacing: .15px; fill: #8a8a8a; text-anchor: middle; }
.ax-t { font: 6.800px Lato, sans-serif; letter-spacing: .3px; fill: #444; text-anchor: middle; }
.pts circle, .pt-on { fill: none; stroke: #66a45b; stroke-width: 1.200; }
.pt-on { stroke: #1d3d1d; stroke-width: 1.400; }

.sliders { display: flex; margin-top: 6px; padding-left: 7px; height: 39px; }
.slider { width: 244px; font: 6.800px Lato, sans-serif; letter-spacing: .12px; color: #444; }
.sl-name { line-height: 8px; }
.sl-vals { display: flex; justify-content: space-between; color: #777; padding: 0 8px 0 2px; margin-top: 4px; line-height: 8px; }
.sl-v2 { padding: 0 7px 0 2px; }
.sl-track { display: block; width: 236px; height: 8px; margin: 4px 0 0 2px; }
.sec-3 { margin: 5px 0 0 9px; letter-spacing: .22px; }
.bars-head { font: 6.800px Lato, sans-serif; letter-spacing: .12px; color: #555; margin: 6px 0 0 8px; height: 9px; display: flex; align-items: center; gap: 3px; line-height: 8px; }
.sort { width: 6px; height: 5px; }
.bars { display: block; width: 491px; height: 90px; margin-top: 1px; }
.bar-l text { font: 6.800px Lato, sans-serif; letter-spacing: .2px; fill: #8a8a8a; text-anchor: end; }
.bar-r rect { fill: #5878a4; }

.dash-map { width: 484px; flex: none; }
.sec-map { margin: 35px 0 4px 3px; }
.map { display: block; width: 484px; height: 418px; overflow: hidden; }
.water path { fill: #fff; stroke: #fff; stroke-width: 1; stroke-linejoin: round; }
.water .pale { fill: #f5f5f5; stroke: #f5f5f5; }
.fill-st path { fill: #7491b5; stroke: #7491b5; stroke-width: .6; stroke-linejoin: round; }
.st-in { fill: none; stroke: #5d7a9e; stroke-width: .7; }
.lines path { fill: none; stroke: #b0b0b0; stroke-width: .7; stroke-linejoin: round; }
.lines .thin { stroke: #cfcfcf; }
.m-lab text { font: 6.300px Lato, sans-serif; letter-spacing: .2px; fill: #a0a0a0; text-anchor: middle; }
.m-lab .on-st { fill: #668; opacity: .55; }
.m-dark { font: 6.800px Lato, sans-serif; letter-spacing: .2px; fill: #333; }
.m-val { font: 6.500px Lato, sans-serif; fill: #777; }
.m-copy { font: 6.500px Lato, sans-serif; fill: #666; }

.filter { flex: 1; padding: 8px 0 0 5px; overflow: hidden; height: 472px; font: 6.800px Lato, sans-serif; letter-spacing: .15px; color: #777; }
.f-title { color: #444; line-height: 9px; letter-spacing: .35px; }
.f-list { list-style: none; margin: 1.500px 0 0 2px; padding: 0; }
.f-list li { height: 11.220px; line-height: 11.220px; padding-left: 12px; position: relative; white-space: nowrap; }
.f-list li::before { content: ""; position: absolute; left: 0; top: 1.500px; width: 8px; height: 8px; border: 1px solid #e0e0e0; background: #fff; }
.f-list li.on::before { border-color: #888; }
.f-list li.on::after { content: "✓"; position: absolute; left: 1.500px; top: 0; font: 6px "DejaVu Sans", sans-serif; line-height: 11px; color: #555; }

.tip { position: absolute; left: 478px; top: 94px; width: 169px; height: 56px; background: #fff; border: 1px solid #ddd; box-shadow: 0 1px 2px rgba(0,0,0,.25); padding: 5.500px 6px 0 7px; font: 500 6.900px Roboto, sans-serif; letter-spacing: .2px; color: #222; }
.tip-row { display: flex; height: 10.200px; line-height: 10.200px; white-space: nowrap; }
.tip-row span:first-child { width: 91px; flex: none; }

.foot { height: 20px; flex: none; background: #f5f5f5; border-top: 4px solid #fff; border-bottom: 1px solid #ddd; display: flex; align-items: center; justify-content: space-between; padding: 0 10px 0 10px; margin-bottom: 3px; color: #777; font: 9.500px Lato, sans-serif; }
.foot-logo { display: flex; align-items: center; gap: 3px; }
.foot-mark { width: 10px; height: 10px; }
.foot-ico { width: 124px; height: 10px; }

.info { width: 1080px; }
.file-name { margin: 0; padding-top: 162px; font-size: 32.100px; line-height: 38px; font-weight: 600; color: #d9d9d9; white-space: nowrap; }
.file-kind { font-size: 24px; color: #85888a; line-height: 30px; margin-top: 9px; padding-bottom: 13px; border-bottom: 2px solid #55585a; }
.info-head { display: flex; justify-content: space-between; align-items: center; height: 60px; padding-right: 4px; }
.info-head h2 { margin: 0; font-size: 28.800px; font-weight: 600; color: #dcdcdc; line-height: 32px; }
.show-less { color: #4a90e8; font-size: 23.800px; line-height: 30px; }
.rows { margin: 4px 0 0; padding-bottom: 26px; border-bottom: 2px solid #55585a; }
.row { display: flex; justify-content: space-between; align-items: center; height: 40px; border-bottom: 2px solid #333537; font-size: 24px; }
.row:last-child { border-bottom: 0; }
.row dt { color: #8c8e90; }
.row dd { margin: 0; color: #d9d9d9; }
.row .dim { letter-spacing: .8px; }
.strip { position: absolute; left: 0; right: 0; top: 1390px; height: 34px; border-top: 2px solid #2f3134; overflow: hidden; }
.strip-ico { position: absolute; left: 428px; top: 29px; width: 340px; height: 10px; }
```
